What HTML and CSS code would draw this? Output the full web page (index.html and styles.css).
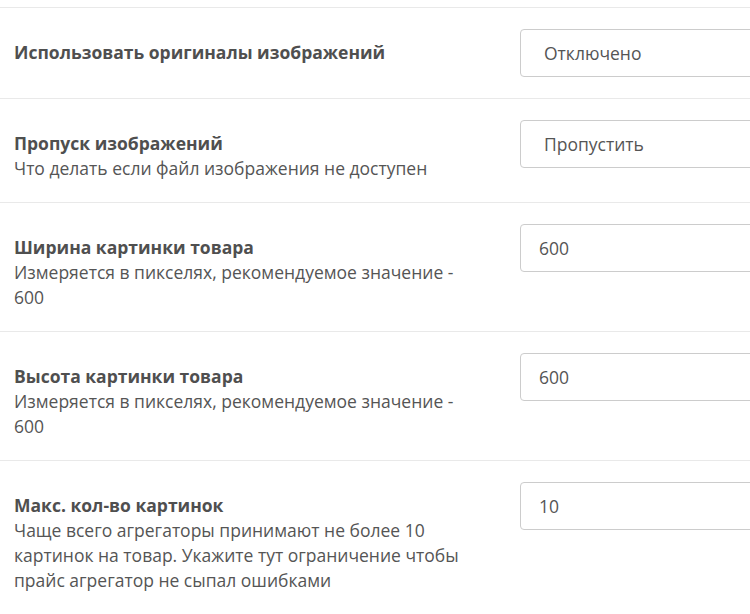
FILE: index.html
```html
<!DOCTYPE html>
<html lang="ru">
    <head>
        <meta charset="UTF-8" />
        <title>Настройки изображений</title>
        <link rel="stylesheet" href="styles.css">
    </head>
    <body>
        <div class="settings">
            <div class="row">
                <div class="label">
                    <div class="title">Использовать оригиналы изображений</div>
                </div>
                <div class="field">
                    <select class="control select">
                        <option>Отключено</option>
                        <option>Включено</option>
                    </select>
                </div>
            </div>

            <div class="row">
                <div class="label">
                    <div class="title">Пропуск изображений</div>
                    <div class="hint">Что делать если файл изображения не доступен</div>
                </div>
                <div class="field">
                    <select class="control select">
                        <option>Пропустить</option>
                        <option>Остановить</option>
                    </select>
                </div>
            </div>

            <div class="row">
                <div class="label">
                    <div class="title">Ширина картинки товара</div>
                    <div class="hint">Измеряется в пикселях, рекомендуемое значение - 600</div>
                </div>
                <div class="field">
                    <input class="control" type="text" value="600">
                </div>
            </div>

            <div class="row">
                <div class="label">
                    <div class="title">Высота картинки товара</div>
                    <div class="hint">Измеряется в пикселях, рекомендуемое значение - 600</div>
                </div>
                <div class="field">
                    <input class="control" type="text" value="600">
                </div>
            </div>

            <div class="row">
                <div class="label">
                    <div class="title">Макс. кол-во картинок</div>
                    <div class="hint">Чаще всего агрегаторы принимают не более 10 картинок на товар. Укажите тут ограничение чтобы прайс агрегатор не сыпал ошибками</div>
                </div>
                <div class="field">
                    <input class="control" type="text" value="10">
                </div>
            </div>
        </div>
    </body>
</html>
```

FILE: styles.css
```css
body {
    font-family: "Open Sans", Arial, sans-serif;
    font-size: 17.5px;
    color: #555;
    background-color: #fff;
    margin: 0;
    padding-top: 7px;
    overflow: hidden;
}
.settings {
    width: 1000px;
}
.row {
    display: flex;
    padding: 21px 0 21px 14px;
    border-top: 1px solid #e9e9e9;
}
.label {
    width: 452px;
    padding-top: 11px;
    line-height: 25px;
}
.title {
    font-weight: bold;
    color: #4f4f4f;
}
.field {
    margin-left: 54px;
}
.control {
    box-sizing: border-box;
    width: 420px;
    height: 48px;
    padding: 0 18px;
    border: 1px solid #ccc;
    border-radius: 4px;
    font-family: inherit;
    font-size: 17.5px;
    color: #555;
    background: #fff;
    outline: none;
}
.select {
    appearance: none;
    -webkit-appearance: none;
    padding-left: 23px;
}
```
